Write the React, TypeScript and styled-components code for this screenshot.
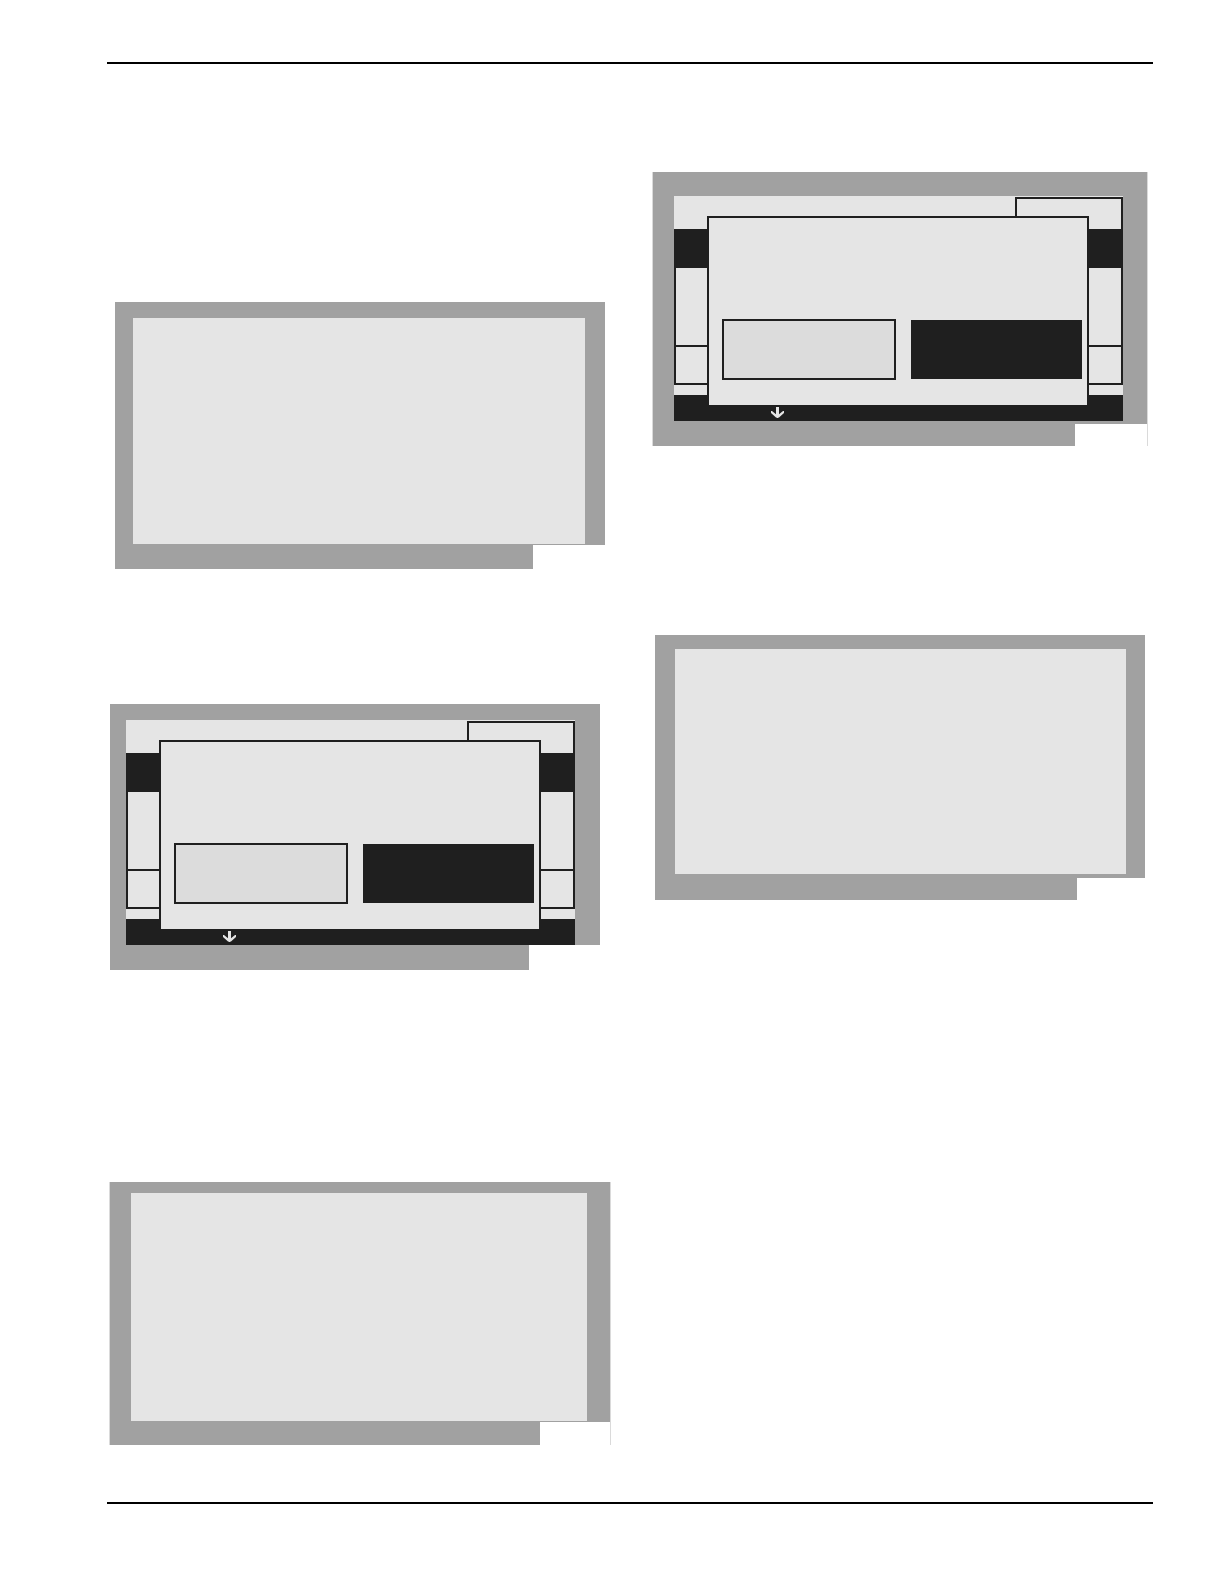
import React from 'react';
import styled, { createGlobalStyle } from 'styled-components';

const ink = '#1f1f1f';
const bezel = '#a1a1a1';
const lcd = '#e5e5e5';
const edge = '#dadada';

const GlobalStyle = createGlobalStyle`
  *, *::before, *::after { box-sizing: border-box; }
  body {
    margin: 0;
    background: #ffffff;
    font-family: "Liberation Sans", Arial, sans-serif;
  }
`;

const Page = styled.main`
  padding: 62px 71px 80px 107px;
`;

const Rule = styled.hr`
  height: 2px;
  margin: 0;
  border: 0;
  background: #000000;
`;

const Columns = styled.div`
  display: grid;
  grid-template-columns: 1fr 1fr;
  gap: 34px;
  padding-bottom: 57px;
`;

const Column = styled.div<{ $top: number }>`
  display: flex;
  flex-direction: column;
  padding-top: ${p => p.$top}px;
`;

const Figure = styled.figure<{ $margin: string; $edged?: boolean }>`
  margin: ${p => p.$margin};
  ${p => p.$edged && `border: solid ${edge}; border-width: 0 1px;`}
`;

const Bezel = styled.div<{ $padding: string }>`
  padding: ${p => p.$padding};
  background: ${bezel};
`;

const Foot = styled.div<{ $height: number; $notch: number }>`
  height: ${p => p.$height}px;
  margin-right: ${p => p.$notch}px;
  background: ${bezel};
`;

const BlankScreen = styled.div<{ $height: number }>`
  height: ${p => p.$height}px;
  background: ${lcd};
`;

const Screen = styled.div`
  position: relative;
  display: flex;
  flex-direction: column;
  background: ${lcd};
`;

const TitleBar = styled.div`
  display: flex;
  justify-content: flex-end;
  height: 33px;
  padding-top: 1px;
`;

const StatusBox = styled.div`
  width: 108px;
  border: 2px solid ${ink};
  border-bottom: 0;
`;

const Menu = styled.div`
  margin-bottom: 10px;
  border: 2px solid ${ink};
  border-top: 0;
`;

const SelectedRow = styled.div`
  height: 39px;
  background: ${ink};
`;

const TallRow = styled.div`
  height: 77px;
`;

const Row = styled.div`
  height: 38px;
  border-top: 2px solid ${ink};
`;

const SoftKeys = styled.div`
  height: 26px;
  padding: 12px 0 0 97px;
  background: ${ink};
`;

const Arrow = styled.svg`
  display: block;
`;

const Dialog = styled.div`
  position: absolute;
  top: 20px;
  left: 33px;
  right: 34px;
  height: 191px;
  display: grid;
  grid-template-columns: 174fr 171fr;
  gap: 15px;
  align-items: center;
  padding: 101px 5px 25px 13px;
  border: 2px solid ${ink};
  background: ${lcd};
`;

const Choice = styled.button<{ $active?: boolean }>`
  height: ${p => (p.$active ? 59 : 61)}px;
  padding: 0;
  border: 2px solid ${ink};
  border-radius: 0;
  background: ${p => (p.$active ? ink : '#dcdcdc')};
`;

function DialogScreen() {
  return (
    <Screen>
      <TitleBar>
        <StatusBox />
      </TitleBar>
      <Menu>
        <SelectedRow />
        <TallRow />
        <Row />
      </Menu>
      <SoftKeys>
        <Arrow width="13" height="11" viewBox="0 0 13 11" aria-hidden="true">
          <path d="M5 0H8V7.2L12 4H13V6L8 10.6H7.6L7 11H6L5.4 10.6H5L0 6V4H1L5 7.2Z" fill={lcd} />
        </Arrow>
      </SoftKeys>
      <Dialog role="group">
        <Choice type="button" aria-label="Left option" />
        <Choice type="button" aria-label="Right option" $active />
      </Dialog>
    </Screen>
  );
}

export default function App() {
  return (
    <>
      <GlobalStyle />
      <Page>
        <Rule />
        <Columns>
          <Column $top={238}>
            <Figure $margin="0 8px 135px">
              <Bezel $padding="16px 20px 1px 18px">
                <BlankScreen $height={226} />
              </Bezel>
              <Foot $height={24} $notch={72} />
            </Figure>
            <Figure $margin="0 13px 212px 3px">
              <Bezel $padding="16px 25px 0 16px">
                <DialogScreen />
              </Bezel>
              <Foot $height={25} $notch={71} />
            </Figure>
            <Figure $margin="0 2px" $edged>
              <Bezel $padding="11px 23px 1px 21px">
                <BlankScreen $height={228} />
              </Bezel>
              <Foot $height={23} $notch={70} />
            </Figure>
          </Column>
          <Column $top={108}>
            <Figure $margin="0 5px 189px" $edged>
              <Bezel $padding="24px 24px 3px 21px">
                <DialogScreen />
              </Bezel>
              <Foot $height={22} $notch={72} />
            </Figure>
            <Figure $margin="0 8px">
              <Bezel $padding="14px 19px 4px 20px">
                <BlankScreen $height={225} />
              </Bezel>
              <Foot $height={22} $notch={68} />
            </Figure>
          </Column>
        </Columns>
        <Rule />
      </Page>
    </>
  );
}
